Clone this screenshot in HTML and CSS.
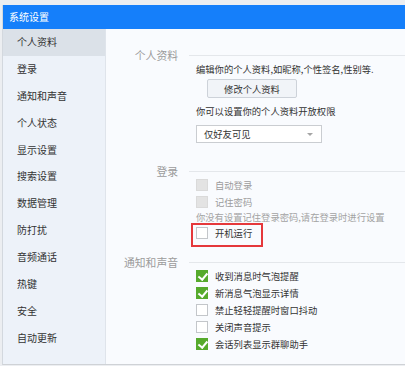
FILE: index.html
```html
<!DOCTYPE html>
<html lang="zh-CN">
<head>
  <meta charset="UTF-8">
  <title>系统设置</title>
  <link rel="stylesheet" href="styles.css">
</head>
<body>
  <div class="window">
    <div class="titlebar">系统设置</div>
    <div class="main">
      <ul class="sidebar">
        <li class="active">个人资料</li>
        <li>登录</li>
        <li>通知和声音</li>
        <li>个人状态</li>
        <li>显示设置</li>
        <li>搜索设置</li>
        <li>数据管理</li>
        <li>防打扰</li>
        <li>音频通话</li>
        <li>热键</li>
        <li>安全</li>
        <li>自动更新</li>
      </ul>
      <div class="content">
        <section class="group group-profile">
          <div class="group-head"><span class="group-label">个人资料</span><span class="group-line"></span></div>
          <div class="group-body">
            <p class="text first">编辑你的个人资料,如昵称,个性签名,性别等.</p>
            <button class="btn">修改个人资料</button>
            <p class="text perm">你可以设置你的个人资料开放权限</p>
            <div class="select">
              <span>仅好友可见</span>
              <span class="arrow"></span>
            </div>
          </div>
        </section>

        <section class="group group-login">
          <div class="group-head"><span class="group-label">登录</span><span class="group-line"></span></div>
          <div class="group-body">
            <label class="check disabled"><span class="box"></span>自动登录</label>
            <label class="check disabled"><span class="box"></span>记住密码</label>
            <p class="text note">你没有设置记住登录密码,请在登录时进行设置</p>
            <label class="check marked"><span class="box"></span>开机运行<span class="highlight"></span></label>
          </div>
        </section>

        <section class="group group-notify">
          <div class="group-head"><span class="group-label">通知和声音</span><span class="group-line"></span></div>
          <div class="group-body">
            <label class="check on"><span class="box"></span>收到消息时气泡提醒</label>
            <label class="check on"><span class="box"></span>新消息气泡显示详情</label>
            <label class="check"><span class="box"></span>禁止轻轻提醒时窗口抖动</label>
            <label class="check"><span class="box"></span>关闭声音提示</label>
            <label class="check on"><span class="box"></span>会话列表显示群聊助手</label>
          </div>
        </section>
      </div>
    </div>
  </div>
</body>
</html>
```

FILE: styles.css
```css
:root {
  --blue: #157ffa;
  --side-bg: #edf2f9;
  --side-active: #dbe1e8;
  --content-bg: #f9fbfe;
  --text: #333333;
  --muted: #9c9c9c;
  --green: #56aa2c;
}
* { margin: 0; padding: 0; box-sizing: border-box; }
body {
  font-family: "Noto Sans CJK SC", "Noto Sans", sans-serif;
  background: #eceef1;
  color: var(--text);
  overflow: hidden;
  padding: 5px 0 0 2px;
}
.window { width: 403px; height: 360px; border-left: 1px solid #d3d8de; border-bottom: 1px solid #cfd2d6; display: flex; flex-direction: column; background: var(--content-bg); }
.titlebar { height: 24px; background: var(--blue); color: #fff; font-size: 10px; line-height: 24px; padding-left: 6px; }
.main { flex: 1; display: flex; min-height: 0; }

.sidebar { list-style: none; width: 103px; background: var(--side-bg); border-right: 1px solid #dfe4eb; }
.sidebar li { height: 26.9px; line-height: 26.9px; font-size: 10px; padding-left: 14px; color: var(--text); }
.sidebar li.active { background: var(--side-active); }

.content { flex: 1; padding-top: 21px; }
.group-head { display: flex; align-items: center; height: 10px; }
.group-label { width: 72px; text-align: right; font-size: 10.8px; line-height: 10px; color: var(--muted); }
.group-line { flex: 1; height: 1px; background: #e4e7eb; margin-left: 11px; }
.group-body { padding-left: 90px; }
.group-login { margin-top: 23px; }
.group-notify { margin-top: 16px; }

.text { font-size: 9.3px; line-height: 14px; }
.text.first { margin-top: 2px; }
.text.perm { margin-top: 6px; }
.text.note { color: #a3a3a3; }

.btn { display: block; margin: 3px 0 0 11px; width: 90px; height: 19px; font-family: inherit; font-size: 9.3px; color: var(--text); background: #f1f4f8; border: 1px solid #cdd2d9; border-radius: 2px; }

.select { margin-top: 7px; width: 126px; height: 18px; background: #fff; border: 1px solid #cacdd1; display: flex; align-items: center; justify-content: space-between; padding: 0 8px 0 7px; font-size: 9.3px; }
.select .arrow { width: 0; height: 0; border-left: 3px solid transparent; border-right: 3px solid transparent; border-top: 3px solid #a5a5a5; }

.check { position: relative; display: flex; align-items: center; height: 17px; font-size: 9.3px; color: var(--text); }
.check .box { width: 12px; height: 12px; border: 1px solid #c3c6ca; background: #fff; margin-right: 7px; position: relative; }
.check.disabled { color: var(--muted); }
.check.disabled .box { background: #e3e3e3; border-color: #dadada; }
.check.on .box { background: var(--green); border-color: var(--green); }
.check.on .box::after { content: ''; position: absolute; left: 3px; top: 0.5px; width: 3.5px; height: 7px; border: solid #fff; border-width: 0 2px 2px 0; transform: rotate(40deg); }
.check.marked { width: 60px; }
.highlight { position: absolute; left: -5px; top: -1px; width: 72px; height: 24px; border: 2px solid #e5383b; }
```
